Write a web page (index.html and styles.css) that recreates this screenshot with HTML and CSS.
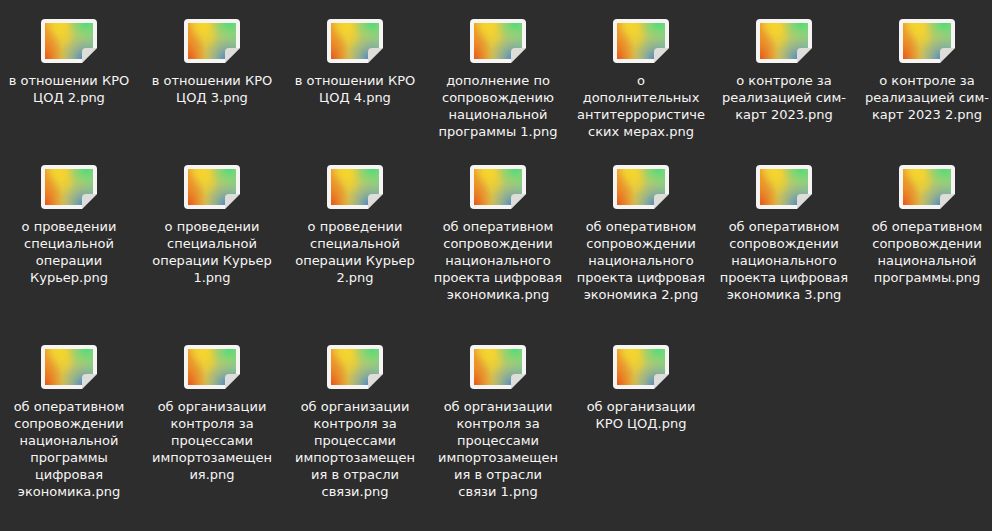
FILE: index.html
```html
<!DOCTYPE html>
<html lang="ru">
<head>
<meta charset="UTF-8">
<meta name="viewport" content="width=device-width, initial-scale=1.0">
<title>Файлы</title>
<link rel="stylesheet" href="styles.css">
</head>
<body>
<svg class="defs" aria-hidden="true">
    <defs>
        <linearGradient id="base" gradientUnits="userSpaceOnUse" x1="4" y1="22" x2="52" y2="22">
            <stop offset="0" stop-color="#ef9c28"/>
            <stop offset="0.35" stop-color="#dcc048"/>
            <stop offset="0.6" stop-color="#bcc868"/>
            <stop offset="1" stop-color="#8acc8a"/>
        </linearGradient>
        <radialGradient id="yellow" gradientUnits="userSpaceOnUse" cx="0" cy="0" r="1" gradientTransform="translate(18 4) rotate(-20) scale(15 28)">
            <stop offset="0" stop-color="#f6d62c"/>
            <stop offset="0.4" stop-color="#f6d62c" stop-opacity="0.8"/>
            <stop offset="1" stop-color="#f6d62c" stop-opacity="0"/>
        </radialGradient>
        <radialGradient id="red" gradientUnits="userSpaceOnUse" cx="0" cy="0" r="1" gradientTransform="translate(4 42) scale(20 34)">
            <stop offset="0" stop-color="#e4501e"/>
            <stop offset="1" stop-color="#ee8a22" stop-opacity="0"/>
        </radialGradient>
        <radialGradient id="green" gradientUnits="userSpaceOnUse" cx="45" cy="4" r="20">
            <stop offset="0" stop-color="#4cdc7c"/>
            <stop offset="1" stop-color="#a0dc60" stop-opacity="0"/>
        </radialGradient>
        <radialGradient id="blue" gradientUnits="userSpaceOnUse" cx="43" cy="40" r="25">
            <stop offset="0" stop-color="#4c84cc"/>
            <stop offset="1" stop-color="#a0b48c" stop-opacity="0"/>
        </radialGradient>
        <symbol id="picture" viewBox="0 0 56 44">
            <path fill="#f6f5f4" d="M4 0h48a4 4 0 0 1 4 4v25L41 44H4a4 4 0 0 1-4-4V4a4 4 0 0 1 4-4z"/>
            <path fill="url(#base)" d="M4 4h48v36H4z"/>
            <path fill="url(#yellow)" d="M4 4h48v36H4z"/>
            <path fill="url(#red)" d="M4 4h48v36H4z"/>
            <path fill="url(#green)" d="M4 4h48v36H4z"/>
            <path fill="url(#blue)" d="M4 4h48v36H4z"/>
            <path fill="#2d2d2d" d="M56 29v15H41z"/>
            <path fill="#deddda" d="M56 29H45a4 4 0 0 0-4 4v11z"/>
        </symbol>
    </defs>
</svg>

<ul class="files">
    <li class="file"><svg class="icon"><use href="#picture"/></svg><span class="name">в отношении КРО ЦОД 2.png</span></li>
    <li class="file"><svg class="icon"><use href="#picture"/></svg><span class="name">в отношении КРО ЦОД 3.png</span></li>
    <li class="file"><svg class="icon"><use href="#picture"/></svg><span class="name">в отношении КРО ЦОД 4.png</span></li>
    <li class="file"><svg class="icon"><use href="#picture"/></svg><span class="name">дополнение по сопровождению национальной программы 1.png</span></li>
    <li class="file"><svg class="icon"><use href="#picture"/></svg><span class="name">о<br>дополнительных антитеррористиче<wbr>ских мерах.png</span></li>
    <li class="file"><svg class="icon"><use href="#picture"/></svg><span class="name">о контроле за реализацией сим-карт 2023.png</span></li>
    <li class="file"><svg class="icon"><use href="#picture"/></svg><span class="name">о контроле за реализацией сим-карт 2023 2.png</span></li>

    <li class="file"><svg class="icon"><use href="#picture"/></svg><span class="name">о проведении специальной операции Курьер.png</span></li>
    <li class="file"><svg class="icon"><use href="#picture"/></svg><span class="name">о проведении специальной операции Курьер 1.png</span></li>
    <li class="file"><svg class="icon"><use href="#picture"/></svg><span class="name">о проведении специальной операции Курьер 2.png</span></li>
    <li class="file"><svg class="icon"><use href="#picture"/></svg><span class="name">об оперативном сопровождении национального проекта цифровая экономика.png</span></li>
    <li class="file"><svg class="icon"><use href="#picture"/></svg><span class="name">об оперативном сопровождении национального проекта цифровая экономика 2.png</span></li>
    <li class="file"><svg class="icon"><use href="#picture"/></svg><span class="name">об оперативном сопровождении национального проекта цифровая экономика 3.png</span></li>
    <li class="file"><svg class="icon"><use href="#picture"/></svg><span class="name">об оперативном сопровождении национальной программы.png</span></li>

    <li class="file"><svg class="icon"><use href="#picture"/></svg><span class="name">об оперативном сопровождении национальной программы цифровая экономика.png</span></li>
    <li class="file"><svg class="icon"><use href="#picture"/></svg><span class="name">об организации контроля за процессами импортозамещен<wbr>ия.png</span></li>
    <li class="file"><svg class="icon"><use href="#picture"/></svg><span class="name">об организации контроля за процессами импортозамещен<wbr>ия в отрасли связи.png</span></li>
    <li class="file"><svg class="icon"><use href="#picture"/></svg><span class="name">об организации контроля за процессами импортозамещен<wbr>ия в отрасли<br>связи 1.png</span></li>
    <li class="file"><svg class="icon"><use href="#picture"/></svg><span class="name">об организации КРО ЦОД.png</span></li>
</ul>
</body>
</html>
```
FILE: styles.css
```css
body {
    margin: 0;
    background-color: #2d2d2d;
    color: #f6f5f4;
    font-family: "DejaVu Sans", sans-serif;
    font-size: 13px;
    line-height: 17px;
}

.defs {
    position: absolute;
    width: 0;
    height: 0;
}

.files {
    display: grid;
    grid-template-columns: repeat(auto-fill, minmax(130px, 1fr));
    grid-template-rows: auto minmax(155px, auto);
    gap: 25px 13px;
    margin: 0;
    padding: 19px 0 19px 4px;
    list-style: none;
}

.file {
    display: flex;
    flex-direction: column;
    align-items: center;
    gap: 9px;
}

.icon {
    width: 56px;
    height: 44px;
}

.name {
    width: 132px;
    margin: 0 -1px;
    text-align: center;
}
```
